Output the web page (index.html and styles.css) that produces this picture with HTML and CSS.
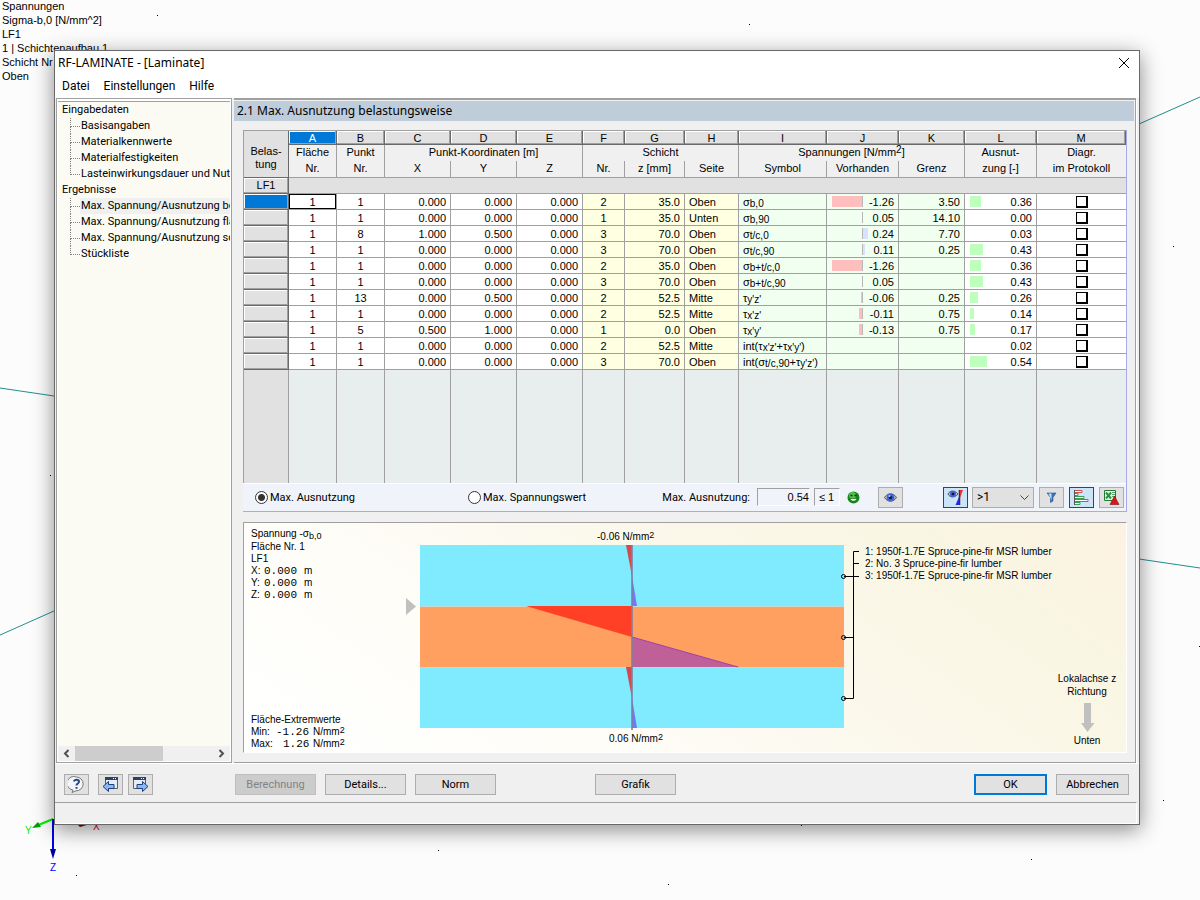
FILE: index.html
```html
<!DOCTYPE html>
<html lang="de">
<head>
    <meta charset="UTF-8">
    <meta name="viewport" content="width=device-width, initial-scale=1.0">
    <title>RF-LAMINATE - [Laminate]</title>
    <link rel="stylesheet" href="styles.css">
</head>
<body>
    <!-- model view behind the dialog -->
    <svg class="model" width="1200" height="900" viewBox="0 0 1200 900" aria-hidden="true">
        <g stroke="#1f8f8c" fill="none">
            <path d="M1139 124L1200 97M1139 559L1200 568M0 388L54 396M0 635L54 611"/>
        </g>
        <path d="M157 15.500h1M749 24.500h1M1173 246.500h1M1163 800.500h1M1031 859.500h1M76 875.500h1M438 850.500h1M668 884.500h1M50 475.500h1M801 825.500h1M1199 646.500h1" stroke="#000"/>
        <path d="M53 819L36 826" stroke="#00f000" stroke-width="2"/>
        <path d="M32 828L38 822L41 827Z" fill="#00a000"/>
        <path d="M53 819V850" stroke="#0000e8" stroke-width="2"/>
        <path d="M50 849H56L53 859Z" fill="#0000a0"/>
        <path d="M78 825L84 822L90 824L80 827Z" fill="#900000"/>
        <text x="25" y="834" fill="#00f000">Y</text>
        <text x="50" y="871" fill="#0000ff">Z</text>
        <text x="93" y="830" fill="#f00000">X</text>
    </svg>
    <div class="model-info">
        <p>Spannungen</p>
        <p>Sigma-b,0 [N/mm^2]</p>
        <p>LF1</p>
        <p>1 | Schichtenaufbau 1</p>
        <p>Schicht Nr</p>
        <p>Oben</p>
    </div>

    <div class="dialog" role="dialog" aria-labelledby="dialog-title">
        <header class="titlebar">
            <h1 id="dialog-title">RF-LAMINATE - [Laminate]</h1>
            <button class="close" aria-label="Schließen">
                <svg width="12" height="12" viewBox="0 0 12 12"><path d="M1 1L11 11M11 1L1 11" stroke="#000" fill="none"/></svg>
            </button>
        </header>
        <nav class="menu">
            <a href="#">Datei</a>
            <a href="#">Einstellungen</a>
            <a href="#">Hilfe</a>
        </nav>

        <div class="workspace">
            <aside class="sidebar">
                <div class="tree">
                    <p>Eingabedaten</p>
                    <ul>
                        <li><a href="#">Basisangaben</a></li>
                        <li><a href="#">Materialkennwerte</a></li>
                        <li><a href="#">Materialfestigkeiten</a></li>
                        <li><a href="#">Lasteinwirkungsdauer und Nutzungsklasse</a></li>
                    </ul>
                    <p>Ergebnisse</p>
                    <ul>
                        <li><a href="#" class="current">Max. Spannung/Ausnutzung belastungsweise</a></li>
                        <li><a href="#">Max. Spannung/Ausnutzung flächenweise</a></li>
                        <li><a href="#">Max. Spannung/Ausnutzung schichtweise</a></li>
                        <li><a href="#">Stückliste</a></li>
                    </ul>
                </div>
                <div class="scrollbar">
                    <svg width="17" height="15" viewBox="0 0 17 15"><path d="M10.500 4L7 7.500L10.500 11" stroke="#505050" stroke-width="2" fill="none"/></svg>
                    <div class="track"><div class="thumb"></div></div>
                    <svg width="17" height="15" viewBox="0 0 17 15"><path d="M6.500 4L10 7.500L6.500 11" stroke="#505050" stroke-width="2" fill="none"/></svg>
                </div>
            </aside>

            <main class="content">
                <h2>2.1 Max. Ausnutzung belastungsweise</h2>

                <section class="results">
                    <table>
                        <colgroup>
                            <col class="w-head"><col class="w-no"><col class="w-no"><col class="w-mid"><col class="w-mid"><col class="w-mid"><col class="w-layer"><col class="w-z"><col class="w-side"><col class="w-symbol"><col class="w-value"><col class="w-mid"><col class="w-value"><col>
                        </colgroup>
                        <thead>
                            <tr class="letters">
                                <th rowspan="3" class="corner">Belas-<br>tung</th>
                                <th class="active">A</th><th>B</th><th>C</th><th>D</th><th>E</th><th>F</th><th>G</th><th>H</th><th>I</th><th>J</th><th>K</th><th>L</th><th>M</th>
                            </tr>
                            <tr class="groups">
                                <th>Fläche</th><th>Punkt</th><th colspan="3">Punkt-Koordinaten [m]</th><th colspan="3">Schicht</th><th colspan="3">Spannungen [N/mm<sup>2</sup>]</th><th>Ausnut-</th><th>Diagr.</th>
                            </tr>
                            <tr class="names">
                                <th>Nr.</th><th>Nr.</th><th>X</th><th>Y</th><th>Z</th><th>Nr.</th><th>z [mm]</th><th>Seite</th><th>Symbol</th><th>Vorhanden</th><th>Grenz</th><th>zung [-]</th><th>im Protokoll</th>
                            </tr>
                        </thead>
                        <tbody>
                            <tr class="loadcase"><th>LF1</th><td colspan="13"></td></tr>
                            <tr>
                                <th class="active"></th><td class="focus">1</td><td>1</td><td class="num">0.000</td><td class="num">0.000</td><td class="num">0.000</td>
                                <td class="layer">2</td><td class="layer num">35.0</td><td class="layer side">Oben</td><td class="stress sym">σ<sub>b,0</sub></td>
                                <td class="stress"><div class="bar"><span class="neg"><i style="width:30px"></i></span>-1.26</div></td><td class="stress num">3.50</td>
                                <td><div class="bar"><i class="ratio" style="width:11px"></i>0.36</div></td><td><input type="checkbox" aria-label="Diagramm Zeile 1"></td>
                            </tr>
                            <tr>
                                <th></th><td>1</td><td>1</td><td class="num">0.000</td><td class="num">0.000</td><td class="num">0.000</td>
                                <td class="layer">1</td><td class="layer num">35.0</td><td class="layer side">Unten</td><td class="stress sym">σ<sub>b,90</sub></td>
                                <td class="stress"><div class="bar"><span class="neg"></span>0.05</div></td><td class="stress num">14.10</td>
                                <td><div class="bar">0.00</div></td><td><input type="checkbox" aria-label="Diagramm Zeile 2"></td>
                            </tr>
                            <tr>
                                <th></th><td>1</td><td>8</td><td class="num">1.000</td><td class="num">0.500</td><td class="num">0.000</td>
                                <td class="layer">3</td><td class="layer num">70.0</td><td class="layer side">Oben</td><td class="stress sym">σ<sub>t/c,0</sub></td>
                                <td class="stress"><div class="bar"><span class="neg"></span><i class="pos" style="width:5px"></i>0.24</div></td><td class="stress num">7.70</td>
                                <td><div class="bar">0.03</div></td><td><input type="checkbox" aria-label="Diagramm Zeile 3"></td>
                            </tr>
                            <tr>
                                <th></th><td>1</td><td>1</td><td class="num">0.000</td><td class="num">0.000</td><td class="num">0.000</td>
                                <td class="layer">3</td><td class="layer num">70.0</td><td class="layer side">Oben</td><td class="stress sym">σ<sub>t/c,90</sub></td>
                                <td class="stress"><div class="bar"><span class="neg"></span><i class="pos" style="width:2px"></i>0.11</div></td><td class="stress num">0.25</td>
                                <td><div class="bar"><i class="ratio" style="width:13px"></i>0.43</div></td><td><input type="checkbox" aria-label="Diagramm Zeile 4"></td>
                            </tr>
                            <tr>
                                <th></th><td>1</td><td>1</td><td class="num">0.000</td><td class="num">0.000</td><td class="num">0.000</td>
                                <td class="layer">2</td><td class="layer num">35.0</td><td class="layer side">Oben</td><td class="stress sym">σ<sub>b+t/c,0</sub></td>
                                <td class="stress"><div class="bar"><span class="neg"><i style="width:30px"></i></span>-1.26</div></td><td class="stress num"></td>
                                <td><div class="bar"><i class="ratio" style="width:11px"></i>0.36</div></td><td><input type="checkbox" aria-label="Diagramm Zeile 5"></td>
                            </tr>
                            <tr>
                                <th></th><td>1</td><td>1</td><td class="num">0.000</td><td class="num">0.000</td><td class="num">0.000</td>
                                <td class="layer">3</td><td class="layer num">70.0</td><td class="layer side">Oben</td><td class="stress sym">σ<sub>b+t/c,90</sub></td>
                                <td class="stress"><div class="bar"><span class="neg"></span>0.05</div></td><td class="stress num"></td>
                                <td><div class="bar"><i class="ratio" style="width:13px"></i>0.43</div></td><td><input type="checkbox" aria-label="Diagramm Zeile 6"></td>
                            </tr>
                            <tr>
                                <th></th><td>1</td><td>13</td><td class="num">0.000</td><td class="num">0.500</td><td class="num">0.000</td>
                                <td class="layer">2</td><td class="layer num">52.5</td><td class="layer side">Mitte</td><td class="stress sym">τ<sub>y'z'</sub></td>
                                <td class="stress"><div class="bar"><span class="neg"><i style="width:1px"></i></span>-0.06</div></td><td class="stress num">0.25</td>
                                <td><div class="bar"><i class="ratio" style="width:8px"></i>0.26</div></td><td><input type="checkbox" aria-label="Diagramm Zeile 7"></td>
                            </tr>
                            <tr>
                                <th></th><td>1</td><td>1</td><td class="num">0.000</td><td class="num">0.000</td><td class="num">0.000</td>
                                <td class="layer">2</td><td class="layer num">52.5</td><td class="layer side">Mitte</td><td class="stress sym">τ<sub>x'z'</sub></td>
                                <td class="stress"><div class="bar"><span class="neg"><i style="width:3px"></i></span>-0.11</div></td><td class="stress num">0.75</td>
                                <td><div class="bar"><i class="ratio" style="width:4px"></i>0.14</div></td><td><input type="checkbox" aria-label="Diagramm Zeile 8"></td>
                            </tr>
                            <tr>
                                <th></th><td>1</td><td>5</td><td class="num">0.500</td><td class="num">1.000</td><td class="num">0.000</td>
                                <td class="layer">1</td><td class="layer num">0.0</td><td class="layer side">Oben</td><td class="stress sym">τ<sub>x'y'</sub></td>
                                <td class="stress"><div class="bar"><span class="neg"><i style="width:3px"></i></span>-0.13</div></td><td class="stress num">0.75</td>
                                <td><div class="bar"><i class="ratio" style="width:5px"></i>0.17</div></td><td><input type="checkbox" aria-label="Diagramm Zeile 9"></td>
                            </tr>
                            <tr>
                                <th></th><td>1</td><td>1</td><td class="num">0.000</td><td class="num">0.000</td><td class="num">0.000</td>
                                <td class="layer">2</td><td class="layer num">52.5</td><td class="layer side">Mitte</td><td class="stress sym">int(τ<sub>x'z'</sub>+τ<sub>x'y'</sub>)</td>
                                <td class="stress"></td><td class="stress num"></td>
                                <td><div class="bar">0.02</div></td><td><input type="checkbox" aria-label="Diagramm Zeile 10"></td>
                            </tr>
                            <tr>
                                <th></th><td>1</td><td>1</td><td class="num">0.000</td><td class="num">0.000</td><td class="num">0.000</td>
                                <td class="layer">3</td><td class="layer num">70.0</td><td class="layer side">Oben</td><td class="stress sym">int(σ<sub>t/c,90</sub>+τ<sub>y'z'</sub>)</td>
                                <td class="stress"></td><td class="stress num"></td>
                                <td><div class="bar"><i class="ratio" style="width:17px"></i>0.54</div></td><td><input type="checkbox" aria-label="Diagramm Zeile 11"></td>
                            </tr>
                            <tr class="filler"><th></th><td></td><td></td><td></td><td></td><td></td><td></td><td></td><td></td><td></td><td></td><td></td><td></td><td></td></tr>
                        </tbody>
                    </table>

                    <div class="toolbar">
                        <label class="radio"><input type="radio" name="mode" checked>Max. Ausnutzung</label>
                        <label class="radio"><input type="radio" name="mode">Max. Spannungswert</label>
                        <div class="summary">
                            <label for="max-ratio">Max. Ausnutzung:</label>
                            <input id="max-ratio" class="readout" type="text" value="0.54" readonly>
                            <span class="limit">≤ 1</span>
                            <svg class="smiley" width="13" height="13" viewBox="0 0 13 13">
                                <circle cx="6.500" cy="6.500" r="6" fill="#17861d"/>
                                <circle cx="5.500" cy="4.500" r="3.500" fill="#4cc44c"/>
                                <path d="M3.500 4.500h2M7.500 4.500h2" stroke="#042f06" stroke-width="1.500"/>
                                <path d="M3 7.500C4 11 9 11 10 7.500Z" fill="#e6ffe6" stroke="#0a5a0c" stroke-width=".6"/>
                            </svg>
                            <button class="icon-btn" aria-label="Ansicht">
                                <svg width="13" height="11" viewBox="0 0 13 11"><path d="M.5 5.500C3.500 .5 9.500 .5 12.500 5.500C9.500 10.500 3.500 10.500 .5 5.500Z" fill="#b4b8c0" stroke="#555c68"/><circle cx="6.500" cy="5.500" r="3.800" fill="#3c62d8"/><circle cx="6.500" cy="5.500" r="1.700" fill="#0c1648"/><circle cx="5.500" cy="4" r="1" fill="#bcd0ff"/></svg>
                            </button>
                        </div>
                        <div class="tools">
                            <button class="icon-btn on" aria-label="Farbskala">
                                <svg width="18" height="17" viewBox="0 0 18 17"><path d="M1 5C3 1 8 1 11 5C8 9 3 9 1 5Z" fill="#b4b8c0" stroke="#555c68"/><circle cx="6" cy="5" r="3" fill="#3c62d8"/><circle cx="6" cy="5" r="1.300" fill="#0c1648"/><path d="M12.500 1V16" stroke="#333" stroke-width="1.500"/><path d="M16 1H13V9Z" fill="#e83030"/><path d="M12 8V16H8.500Z" fill="#2828d8"/></svg>
                            </button>
                            <div class="select">
                                <select aria-label="Filterwert"><option>&gt;1</option></select>
                                <svg width="9" height="6" viewBox="0 0 9 6"><path d="M.5 .5L4.500 4.500L8.500 .5" stroke="#444" fill="none"/></svg>
                            </div>
                            <button class="icon-btn" aria-label="Filter">
                                <svg width="11" height="11" viewBox="0 0 11 11"><path d="M1 1H10L7 5.500V9L4.500 10.500V5.500Z" fill="#3f70bc" stroke="#28568f" stroke-width=".6"/><path d="M2.500 1.500H5.500V8Z" fill="#c4dcf8"/></svg>
                            </button>
                            <button class="icon-btn on" aria-label="Balken">
                                <svg width="17" height="17" viewBox="0 0 17 17"><path d="M1.500 1V16" stroke="#555"/><g fill="#fff"><path d="M2 1.500H9V3.500H2M2 10.500H15V12.500H2" stroke="#d05050"/><path d="M2 4.500H5V6.500H2M2 13.500H7V15.500H2" stroke="#38a050"/><path d="M2 7.500H11V9.500H2" stroke="#38a050"/></g></svg>
                            </button>
                            <button class="icon-btn" aria-label="Excel-Export">
                                <svg width="17" height="17" viewBox="0 0 17 17"><path d="M1.500 1.500H12.500V11.500H1.500Z" fill="#e8f4e8" stroke="#287838"/><path d="M9 3.500H12M9 5.500H12M9 7.500H12" stroke="#59a565"/><path d="M3 3.500L8 9.500M8 3.500L3 9.500" stroke="#2a9140" stroke-width="2"/><path d="M11.500 7L16 15.500H7Z" fill="#d81818" stroke="#7c1010" stroke-width=".6"/></svg>
                            </button>
                        </div>
                    </div>
                </section>

                <section class="diagram">
                    <svg width="883" height="229" viewBox="0 0 883 229" role="img" aria-label="Spannungsverlauf">
                        <g class="layers">
                            <rect x="176" y="22" width="424" height="183" fill="#80eaff"/>
                            <rect x="176" y="83" width="424" height="61" fill="#ffa060"/>
                            <path d="M176 83.500H600M176 144.500H600" stroke="#c8d8d0"/>
                        </g>
                        <g class="curve">
                            <path d="M382 22H388V53Z" fill="#d04a50"/>
                            <path d="M388 53V83H393Z" fill="#7078ff"/>
                            <path d="M282 83H388V114Z" fill="#ff4026"/>
                            <path d="M388 114V144H494Z" fill="#c06098"/>
                            <path d="M388 114L494 144" stroke="#a040b0" fill="none"/>
                            <path d="M382 144H388V175Z" fill="#d04a50"/>
                            <path d="M388 175V205H393Z" fill="#7078ff"/>
                            <path d="M388 22V207" stroke="#8080a0" stroke-opacity=".8" stroke-width="2"/>
                        </g>
                        <path d="M162 75L172 83.500L162 92Z" fill="#c0c0c0"/>
                        <g stroke="#000" fill="none">
                            <path d="M615 28.500H609.500V175.500H600M609.500 40.500H615M600 53.500H615M600 114.500H609.500"/>
                            <circle cx="599.500" cy="53.500" r="2"/>
                            <circle cx="599.500" cy="114.500" r="2"/>
                            <circle cx="599.500" cy="175.500" r="2"/>
                        </g>
                        <path d="M840 180H847V200H850.500L843.500 209L837 200H840Z" fill="#c0c0c0"/>
                        <text x="7" y="14">Spannung -σ<tspan class="small" dy="2">b,0</tspan></text>
                        <text x="7" y="27">Fläche Nr. 1</text>
                        <text x="7" y="39">LF1</text>
                        <text x="7" y="51">X: <tspan class="mono" x="20">0.000</tspan><tspan x="60">m</tspan></text>
                        <text x="7" y="63">Y: <tspan class="mono" x="20">0.000</tspan><tspan x="60">m</tspan></text>
                        <text x="7" y="75">Z: <tspan class="mono" x="20">0.000</tspan><tspan x="60">m</tspan></text>
                        <text x="7" y="200">Fläche-Extremwerte</text>
                        <text x="7" y="212">Min: <tspan class="mono" x="32">-1.26</tspan><tspan x="69">N/mm</tspan><tspan class="small" dy="-2">2</tspan></text>
                        <text x="7" y="224">Max: <tspan class="mono" x="39">1.26</tspan><tspan x="69">N/mm</tspan><tspan class="small" dy="-2">2</tspan></text>
                        <text x="353" y="17">-0.06 N/mm<tspan class="small" dy="-2">2</tspan></text>
                        <text x="365" y="219">0.06 N/mm<tspan class="small" dy="-2">2</tspan></text>
                        <text x="621" y="32">1: 1950f-1.7E Spruce-pine-fir MSR lumber</text>
                        <text x="621" y="44">2: No. 3 Spruce-pine-fir lumber</text>
                        <text x="621" y="56">3: 1950f-1.7E Spruce-pine-fir MSR lumber</text>
                        <text x="843" y="159" text-anchor="middle">Lokalachse z</text>
                        <text x="843" y="172" text-anchor="middle">Richtung</text>
                        <text x="843" y="221" text-anchor="middle">Unten</text>
                    </svg>
                </section>
            </main>
        </div>

        <footer class="actions">
            <div class="action-icons">
                <button class="icon-btn" aria-label="Hilfe">
                    <svg width="17" height="17" viewBox="0 0 17 17"><path d="M8.500 1A6.800 6.800 0 1 0 5 14L4 16.500L8 14.800A6.900 6.900 0 0 0 8.500 1Z" fill="#f4f6fa" stroke="#777"/><path d="M6 5.500C6.500 3 11 3 11 5.700C11 7.500 8.500 7.500 8.500 9.500" stroke="#2c4584" stroke-width="2" fill="none"/><path d="M7.500 11H9.500V12.800H7.500Z" fill="#2c4584"/></svg>
                </button>
                <button class="icon-btn" aria-label="Zurück">
                    <svg width="17" height="17" viewBox="0 0 17 17"><path d="M3.500 1.500H15.500V12.500H3.500Z" fill="#e8edf4" stroke="#566"/><path d="M3 1H16V4H3Z" fill="#2c4168"/><path d="M11 2.500h1M13 2.500h1" stroke="#fff"/><path d="M1 10.500L6.500 5.500V8.500H12V12.500H6.500V15.500Z" fill="#8ab8f0" stroke="#1c3f88"/></svg>
                </button>
                <button class="icon-btn" aria-label="Weiter">
                    <svg width="17" height="17" viewBox="0 0 17 17"><path d="M1.500 1.500H13.500V12.500H1.500Z" fill="#e8edf4" stroke="#566"/><path d="M1 1H14V4H1Z" fill="#2c4168"/><path d="M9 2.500h1M11 2.500h1" stroke="#fff"/><path d="M16 10.500L10.500 5.500V8.500H5V12.500H10.500V15.500Z" fill="#8ab8f0" stroke="#1c3f88"/></svg>
                </button>
            </div>
            <button class="btn" disabled>Berechnung</button>
            <button class="btn">Details...</button>
            <button class="btn">Norm</button>
            <button class="btn graphic">Grafik</button>
            <div class="confirm">
                <button class="btn primary">OK</button>
                <button class="btn">Abbrechen</button>
            </div>
        </footer>
        <div class="statusbar"></div>
    </div>
</body>
</html>
```
FILE: styles.css
```css
* {
    margin: 0;
    padding: 0;
    box-sizing: border-box;
}

:root {
    --face: #f0f0f0;
    --cell: #e1e1e1;
    --line: #a0a0a0;
    --dark: #696969;
    --accent: #0078d7;
    --title: "Noto Sans", "Open Sans", sans-serif;
    --ui: Roboto, "Open Sans", sans-serif;
    --grid: "Liberation Sans", Arial, sans-serif;
}

body {
    position: relative;
    min-height: 100vh;
    overflow: hidden;
    background: #fcfcfc;
    color: #000;
    font-family: var(--ui);
    font-size: 11px;
}

button,
input,
select {
    font: inherit;
    color: inherit;
}

a {
    color: inherit;
    text-decoration: none;
}

ul {
    list-style: none;
}

svg {
    display: block;
    flex: none;
}

/* Model view */
.model {
    position: absolute;
    top: 0;
    left: 0;
    font-family: var(--grid);
    font-size: 10px;
}

.model-info {
    position: absolute;
    top: -1px;
    left: 2px;
    font-family: var(--grid);
    line-height: 14px;
    white-space: nowrap;
}

/* Dialog */
.dialog {
    position: absolute;
    top: 50px;
    left: 54px;
    right: 60px;
    min-width: 1000px;
    display: flex;
    flex-direction: column;
    background: var(--face);
    border: 1px solid var(--dark);
    box-shadow: 0 5px 20px rgba(0, 0, 0, 0.45);
}

.titlebar {
    display: flex;
    align-items: center;
    justify-content: space-between;
    height: 24px;
    padding: 0 9px 0 3px;
    background: #fff;
}

.titlebar h1 {
    font-family: var(--title);
    font-size: 12px;
    line-height: 22px;
    font-weight: 400;
}

.close {
    border: none;
    background: none;
}

.menu {
    display: flex;
    gap: 14px;
    height: 23px;
    padding-left: 7px;
    line-height: 23px;
    font-size: 12px;
    background: #fff;
}

.workspace {
    display: flex;
    gap: 2px;
    padding: 0 3px 0 1px;
}

/* Sidebar tree */
.sidebar {
    display: flex;
    flex-direction: column;
    flex: none;
    width: 176px;
    padding: 2px 1px 1px;
    background: #fff;
    border: 1px solid var(--line);
}

.tree {
    flex: 1;
    overflow: hidden;
    padding-left: 4px;
    background: #fcfbf3;
    border-top: 1px solid var(--line);
    line-height: 16px;
    white-space: nowrap;
}

.tree ul {
    padding-left: 8px;
}

.tree li {
    position: relative;
    padding-left: 10px;
}

.tree li::before {
    content: "";
    position: absolute;
    top: 0;
    left: 0;
    width: 9px;
    height: 8px;
    border-left: 1px dotted #808080;
    border-bottom: 1px dotted #808080;
}

.tree li:not(:last-child)::after {
    content: "";
    position: absolute;
    top: 8px;
    left: 0;
    height: 8px;
    border-left: 1px dotted #808080;
}

.tree li a {
    display: block;
    padding-left: 1px;
}

.tree .current {
    background: var(--face);
}

.scrollbar {
    display: flex;
    height: 15px;
    background: var(--face);
}

.track {
    flex: 1;
}

.thumb {
    width: 64%;
    height: 15px;
    background: #cdcdcd;
}

/* Main panel */
.content {
    flex: 1;
    min-width: 0;
    padding: 1px 1px 9px 0;
    border: 1px solid var(--line);
    border-top-width: 2px;
    border-left: none;
    box-shadow: 1px 1px 0 #fff;
}

.content h2 {
    height: 20px;
    padding-left: 3px;
    line-height: 20px;
    font-family: var(--title);
    font-size: 12px;
    font-weight: 400;
    background: #bfcddb;
}

.results {
    margin: 9px 7px 0 9px;
    border-right: 1px solid #a8a8ec;
    border-bottom: 1px solid #a8a8ec;
}

table {
    width: 100%;
    table-layout: fixed;
    border-collapse: separate;
    border-spacing: 0;
    border-top: 1px solid var(--line);
    border-left: 1px solid var(--line);
    font-family: var(--grid);
    line-height: 14px;
}

.w-head { width: 45px; }
.w-no { width: 48px; }
.w-mid { width: 66px; }
.w-layer { width: 42px; }
.w-z { width: 60px; }
.w-side { width: 54px; }
.w-symbol { width: 88px; }
.w-value { width: 72px; }

th,
td {
    height: 16px;
    text-align: center;
    font-weight: 400;
    white-space: nowrap;
    overflow: hidden;
    border-right: 1px solid var(--line);
}

td {
    background: #fff;
    border-bottom: 1px solid var(--line);
}

tr > :last-child {
    border-right: none;
}

.letters th {
    height: 14px;
    line-height: 12px;
    background: var(--cell);
    border-right: 1px solid var(--dark);
    border-bottom: 1px solid var(--dark);
    box-shadow: inset -1px -1px 0 var(--line), inset 1px 1px 0 #fff;
}

.letters .corner {
    padding-top: 8px;
    line-height: 13px;
    box-shadow: none;
}

th.active,
.letters .active {
    background: var(--accent);
    color: #fff;
}

.groups th,
.names th {
    padding-bottom: 2px;
    background: var(--face);
}

.names th {
    height: 17px;
    border-bottom: 1px solid var(--line);
}

sup {
    font-size: 10px;
    line-height: 0;
    vertical-align: 3px;
}

sub {
    font-size: 10px;
    line-height: 0;
    vertical-align: -1px;
}

tbody th {
    line-height: 13px;
    background: var(--cell);
    border-right: 1px solid var(--dark);
    border-bottom: 1px solid var(--dark);
    box-shadow: inset -1px -1px 0 var(--line), inset 1px 1px 0 #fff;
}

.loadcase th {
    padding-bottom: 1px;
}

.loadcase td {
    background: var(--cell);
}

td.focus {
    box-shadow: inset 0 0 0 1px #000;
}

td.num {
    padding-right: 4px;
    text-align: right;
}

td.layer {
    background: #ffffe1;
}

td.side,
td.sym {
    padding-left: 4px;
    text-align: left;
}

td.stress {
    background: #f0fff0;
}

.bar {
    display: flex;
    align-items: center;
    justify-content: flex-end;
    height: 15px;
    padding-right: 4px;
}

.bar i {
    height: 11px;
}

.neg {
    display: flex;
    justify-content: flex-end;
    width: 36px;
    height: 11px;
    margin-right: auto;
    border-right: 1px solid #b8b8b8;
}

.neg i {
    background: #ffbebe;
}

.neg:has(+ .pos) {
    margin-right: 0;
}

.pos {
    margin-right: auto;
    background: #d8e2ff;
}

.ratio {
    margin-left: 5px;
    margin-right: auto;
    background: #beffbe;
}

input[type="checkbox"] {
    display: block;
    appearance: none;
    width: 12px;
    height: 12px;
    margin: 0 auto;
    background: #fff;
    border: 1px solid #000;
    border-right-width: 2px;
    border-bottom-width: 2px;
}

.filler th,
.filler td {
    height: 113px;
    background: #e8eeee;
    border-bottom: none;
}

.filler th {
    background: var(--cell);
    border-right-color: var(--line);
    box-shadow: none;
}

/* Toolbar below the table */
.toolbar {
    display: flex;
    align-items: center;
    height: 28px;
    padding: 0 2px 1px 12px;
    background: #f0f4fa;
    border-top: 1px solid #fff;
}

.radio {
    display: flex;
    align-items: center;
    gap: 2px;
    flex: none;
    white-space: nowrap;
}

.radio:first-child {
    width: 213px;
}

input[type="radio"] {
    appearance: none;
    width: 13px;
    height: 13px;
    background: #fff;
    border: 1px solid #333;
    border-radius: 50%;
}

input[type="radio"]:checked {
    background: radial-gradient(circle, #333 3px, #fff 4px);
}

.summary,
.tools {
    display: flex;
    align-items: center;
}

.summary {
    gap: 4px;
    margin-left: auto;
    margin-right: 40px;
}

.summary label {
    margin-right: 3px;
    white-space: nowrap;
}

.readout,
.limit {
    height: 18px;
    font-family: var(--grid);
    background: #f0f4fa;
    border: 1px solid #fff;
    border-top-color: var(--line);
    border-left-color: var(--line);
}

.readout {
    width: 53px;
    text-align: right;
}

.limit {
    width: 26px;
    padding-left: 4px;
    line-height: 16px;
}

.smiley {
    margin: 0 14px 0 3px;
}

.tools {
    gap: 5px;
}

.icon-btn {
    display: flex;
    align-items: center;
    justify-content: center;
    flex: none;
    width: 25px;
    height: 21px;
    background: var(--cell);
    border: 1px solid #adadad;
}

.icon-btn.on {
    background: #cce4f7;
    border-color: #005499;
}

.select {
    position: relative;
    margin-left: -1px;
}

.select select {
    display: block;
    appearance: none;
    width: 62px;
    height: 21px;
    padding-left: 4px;
    font-size: 12px;
    background: var(--cell);
    border: 1px solid #adadad;
    border-radius: 0;
}

.select svg {
    position: absolute;
    top: 8px;
    right: 5px;
    pointer-events: none;
}

/* Stress diagram */
.diagram {
    overflow: hidden;
    margin: 10px 7px 0 9px;
    border: 1px solid #fff;
    border-top-color: var(--line);
    border-left-color: var(--line);
    background: linear-gradient(35deg, #fff 0%, #fefdf8 30%, #fbf8ec 55%, #f9f6e4 80%, #fdf2e2 100%);
}

.diagram text {
    font-family: var(--grid);
    font-size: 10px;
}

.diagram .mono {
    font-family: "Liberation Mono", monospace;
    font-size: 11px;
}

.diagram .small {
    font-size: 9px;
}

/* Bottom buttons */
.actions {
    display: flex;
    gap: 9px;
    height: 39px;
    padding: 10px 10px 0 9px;
    border-top: 1px solid #fff;
}

.action-icons {
    display: flex;
    gap: 5px;
    width: 162px;
}

.action-icons :first-child {
    margin-right: 4px;
}

.action-icons svg:first-child {
    margin-right: 0;
}

.btn {
    width: 81px;
    height: 21px;
    background: var(--cell);
    border: 1px solid #adadad;
}

.btn:disabled {
    color: #838383;
    background: #ccc;
    border-color: #bfbfbf;
}

.graphic {
    margin-left: 90px;
}

.confirm {
    display: flex;
    gap: 9px;
    margin-left: auto;
}

.confirm .btn {
    width: 73px;
}

.confirm .primary {
    border: 2px solid var(--accent);
}

.statusbar {
    height: 22px;
    margin-right: 2px;
    border-top: 1px solid var(--line);
    border-right: 1px solid #fff;
    border-bottom: 1px solid #fff;
}
```
